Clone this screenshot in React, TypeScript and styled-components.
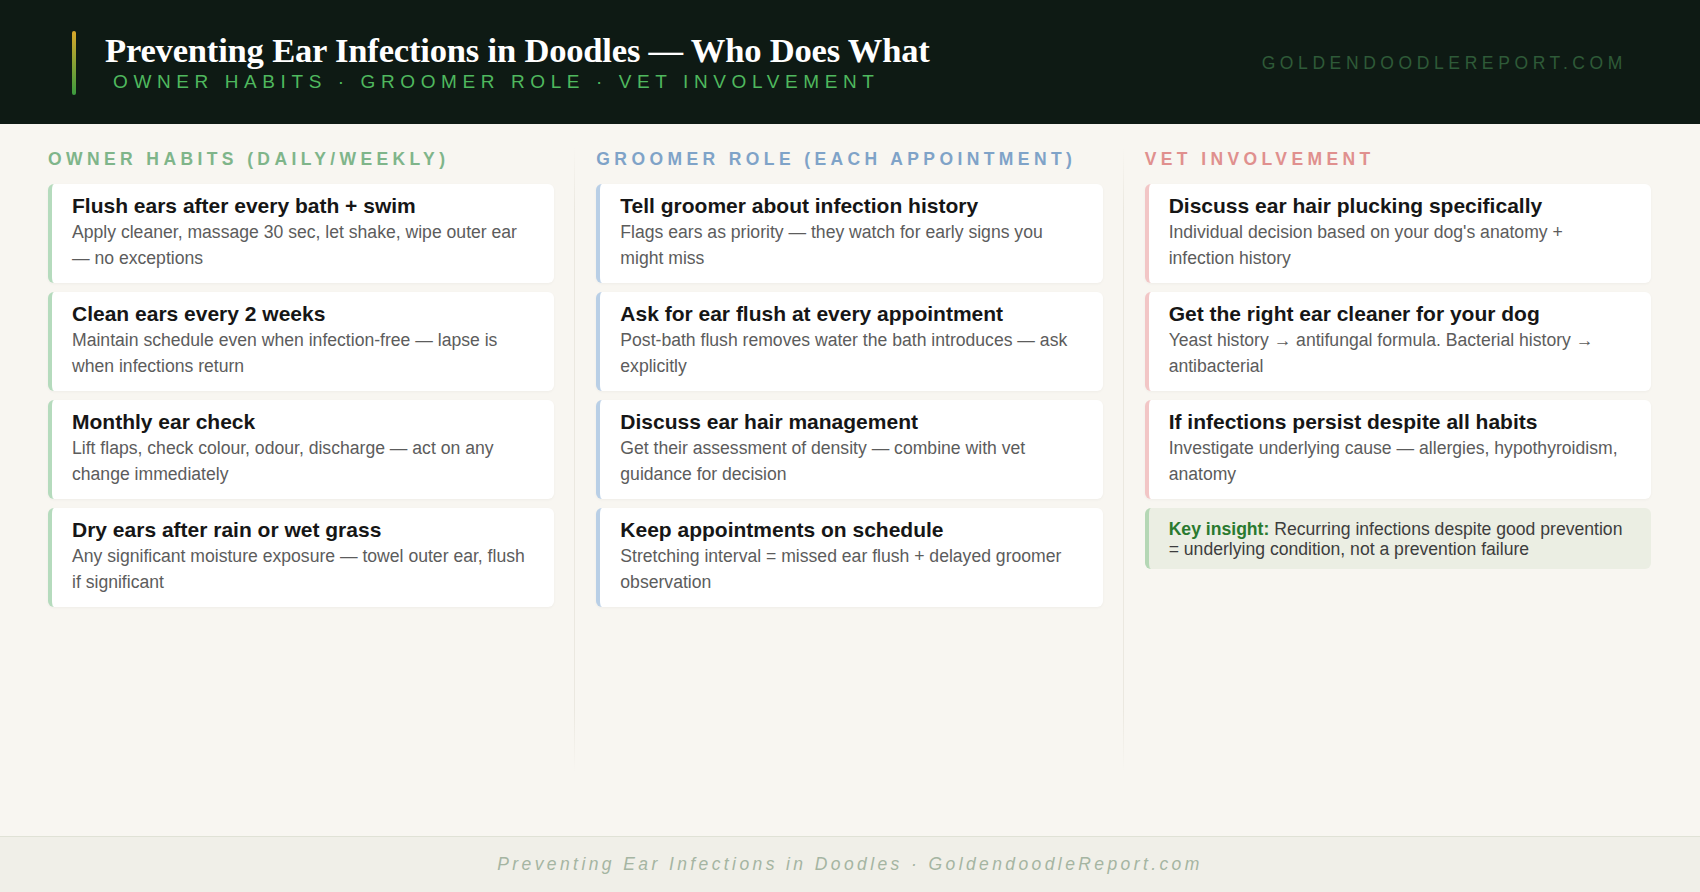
import styled, { createGlobalStyle } from "styled-components";

const Global = createGlobalStyle`
  html, body { margin: 0; padding: 0; background: #f8f6f1; }
  body { font-family: "Liberation Sans", Arial, sans-serif; }
`;

type Item = { t: string; d: string };

const cols: { title: string; color: string; border: string; items: Item[] }[] = [
  {
    title: "Owner Habits (Daily/Weekly)",
    color: "#7fb58a",
    border: "#b5dbbd",
    items: [
      { t: "Flush ears after every bath + swim", d: "Apply cleaner, massage 30 sec, let shake, wipe outer ear — no exceptions" },
      { t: "Clean ears every 2 weeks", d: "Maintain schedule even when infection-free — lapse is when infections return" },
      { t: "Monthly ear check", d: "Lift flaps, check colour, odour, discharge — act on any change immediately" },
      { t: "Dry ears after rain or wet grass", d: "Any significant moisture exposure — towel outer ear, flush if significant" },
    ],
  },
  {
    title: "Groomer Role (Each Appointment)",
    color: "#7fa3c8",
    border: "#b9cfe6",
    items: [
      { t: "Tell groomer about infection history", d: "Flags ears as priority — they watch for early signs you might miss" },
      { t: "Ask for ear flush at every appointment", d: "Post-bath flush removes water the bath introduces — ask explicitly" },
      { t: "Discuss ear hair management", d: "Get their assessment of density — combine with vet guidance for decision" },
      { t: "Keep appointments on schedule", d: "Stretching interval = missed ear flush + delayed groomer observation" },
    ],
  },
  {
    title: "Vet Involvement",
    color: "#e0908e",
    border: "#f2c6c6",
    items: [
      { t: "Discuss ear hair plucking specifically", d: "Individual decision based on your dog's anatomy + infection history" },
      { t: "Get the right ear cleaner for your dog", d: "Yeast history → antifungal formula. Bacterial history → antibacterial" },
      { t: "If infections persist despite all habits", d: "Investigate underlying cause — allergies, hypothyroidism, anatomy" },
    ],
  },
];

export default function App() {
  return (
    <Page>
      <Global />
      <Header>
        <TitleBlock>
          <Accent />
          <div>
            <Title>Preventing Ear Infections in Doodles — Who Does What</Title>
            <Subtitle>Owner Habits · Groomer Role · Vet Involvement</Subtitle>
          </div>
        </TitleBlock>
        <Domain>GoldendoodleReport.com</Domain>
      </Header>
      <Main>
        {cols.map((c, i) => (
          <Column key={c.title} $divider={i > 0}>
            <ColHead $color={c.color}>{c.title}</ColHead>
            {c.items.map((it) => (
              <Card key={it.t} $border={c.border}>
                <CardTitle>{it.t}</CardTitle>
                <CardText>{it.d}</CardText>
              </Card>
            ))}
            {i === 2 && (
              <Insight>
                <strong>Key insight:</strong> Recurring infections despite good prevention = underlying condition, not a prevention failure
              </Insight>
            )}
          </Column>
        ))}
      </Main>
      <Footer>Preventing Ear Infections in Doodles · GoldendoodleReport.com</Footer>
    </Page>
  );
}

const Page = styled.div`
  width: 1700px;
  height: 892px;
  display: flex;
  flex-direction: column;
  background: #f8f6f1;
  overflow: hidden;
`;

const Header = styled.header`
  height: 124px;
  flex-shrink: 0;
  background: #0e1a14;
  display: flex;
  align-items: center;
  justify-content: space-between;
  padding: 0 73px 0 72px;
  box-sizing: border-box;
`;

const TitleBlock = styled.div`
  display: flex;
  align-items: center;
  gap: 29px;
`;

const Accent = styled.div`
  width: 4px;
  height: 64px;
  border-radius: 2px;
  background: linear-gradient(#d9a72a, #3a9a3e);
  margin-top: 2px;
`;

const Title = styled.h1`
  margin: 0;
  font-family: "Liberation Serif", "Times New Roman", serif;
  font-weight: 700;
  font-size: 34.6px;
  line-height: 38px;
  color: #ffffff;
  letter-spacing: -0.2px;
`;

const Subtitle = styled.div`
  margin: 2px 0 0 8px;
  font-size: 19px;
  letter-spacing: 5.6px;
  text-transform: uppercase;
  color: #4fb85e;
`;

const Domain = styled.div`
  font-size: 17.5px;
  letter-spacing: 4.6px;
  text-transform: uppercase;
  color: #2e5a38;
  margin-top: 2px;
`;

const Main = styled.main`
  flex: 1;
  min-height: 0;
  display: grid;
  grid-template-columns: repeat(3, 1fr);
  column-gap: 42px;
  padding: 23px 49px 0 48px;
  box-sizing: border-box;
`;

const Column = styled.section<{ $divider: boolean }>`
  display: flex;
  flex-direction: column;
  gap: 9px;
  position: relative;
  margin-bottom: 64px;
  &::before {
    content: "";
    display: ${(p) => (p.$divider ? "block" : "none")};
    position: absolute;
    left: -22px;
    top: 0;
    bottom: 0;
    width: 1px;
    background: linear-gradient(#f8f6f1, #ebe8e0 10%, #ebe8e0 90%, #f8f6f1);
  }
`;

const ColHead = styled.h2<{ $color: string }>`
  margin: 0 0 4px;
  font-size: 17.5px;
  font-weight: 700;
  letter-spacing: 4.4px;
  text-transform: uppercase;
  color: ${(p) => p.$color};
  line-height: 24px;
`;

const Card = styled.div<{ $border: string }>`
  background: #ffffff;
  border-left: 4px solid ${(p) => p.$border};
  border-radius: 6px;
  box-shadow: 0 1px 3px rgba(0, 0, 0, 0.04);
  padding: 9px 18px 11px 20px;
  min-height: 79px;
`;

const CardTitle = styled.div`
  font-size: 21px;
  font-weight: 700;
  color: #161616;
  line-height: 26px;
`;

const CardText = styled.div`
  font-size: 17.6px;
  line-height: 26px;
  color: #5c5c5c;
`;

const Insight = styled.div`
  background: #ebeee3;
  border-left: 4px solid #b5d7b5;
  border-radius: 6px;
  padding: 11px 18px 10px 20px;
  font-size: 17.6px;
  line-height: 20px;
  color: #3d3d3d;
  strong { color: #2a7a2f; }
`;

const Footer = styled.footer`
  height: 55px;
  flex-shrink: 0;
  border-top: 1px solid #e0e2d6;
  background: #f0efe8;
  display: flex;
  align-items: center;
  justify-content: center;
  font-style: italic;
  font-size: 17.5px;
  letter-spacing: 3.4px;
  color: #a5b5a2;
`;
